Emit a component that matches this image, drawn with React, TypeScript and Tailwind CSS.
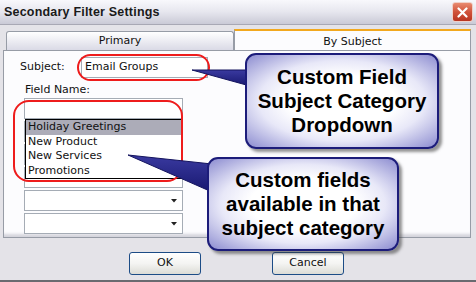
import React from "react";

const ui = { fontFamily: '"DejaVu Sans", Verdana, sans-serif' };
const callFont = { fontFamily: '"Liberation Sans", Arial, sans-serif' };

const Combo = ({ arrow = true, children }: { arrow?: boolean; children?: React.ReactNode }) => (
  <div className="relative h-[21px] w-[159px] border border-[#a5acb5] bg-white">
    {arrow && (
      <svg className="absolute right-[5px] top-[8px]" width="6" height="4" viewBox="0 0 6 4">
        <path d="M0 0h6L3 3.5z" fill="#222" />
      </svg>
    )}
    {children}
  </div>
);

const Callout = ({ lines, className }: { lines: string[]; className: string }) => (
  <div
    className={`absolute rounded-[11px] border-2 border-[#1c1c7a] bg-[radial-gradient(ellipse_at_center,#ffffff_40%,#e8e8f8_62%,#8c8cd0_100%)] shadow-[3px_3px_3px_rgba(60,60,60,0.55)] flex flex-col items-center justify-center text-[20.5px] leading-[24px] font-bold text-black ${className}`}
    style={callFont}
  >
    {lines.map((l) => (
      <div key={l}>{l}</div>
    ))}
  </div>
);

export default function App() {
  return (
    <div className="relative w-[476px] h-[282px] overflow-hidden bg-[#e4e3e8] flex flex-col border-b-2 border-[#6a6a70]" style={ui}>
      {/* title bar */}
      <div className="h-[25px] shrink-0 flex items-center justify-between pl-[4px] pr-[3px] bg-gradient-to-b from-[#f8f8fc] via-[#e6e6ee] to-[#cacad6] border-b border-[#a8a8b4]">
        <span className="text-[12.5px] font-bold text-[#1a1a1a] tracking-[0.2px]" style={callFont}>
          Secondary Filter Settings
        </span>
        <div className="w-[21px] h-[20px] rounded-[3px] border border-[#f0d0c8] bg-gradient-to-b from-[#e88a70] via-[#d0523a] to-[#b83420] flex items-center justify-center">
          <svg width="11" height="11" viewBox="0 0 11 11">
            <path d="M1.5 1.5l8 8M9.5 1.5l-8 8" stroke="#fff" strokeWidth="2.2" strokeLinecap="round" />
          </svg>
        </div>
      </div>

      {/* tabs */}
      <div className="flex items-end pl-[6px] pr-[5px] pt-[4px] h-[25px] shrink-0">
        <div className="w-[228px] h-[19px] flex items-center justify-center text-[11px] text-[#111] border border-b-0 border-[#979ca6] rounded-t-[3px] bg-gradient-to-b from-[#ffffff] to-[#dadae6]">
          Primary
        </div>
        <div className="flex-1 h-[21px] flex items-start justify-center pt-[3px] text-[11px] text-[#111] border-t-2 border-[#f2a81e] border-x border-x-[#979ca6] bg-[#fcfcfe] relative z-10">
          By Subject
        </div>
      </div>

      {/* tab panel */}
      <div className="mx-[3px] w-[468px] h-[188px] shrink-0 border border-[#979ca6] bg-[#fcfcfe] shadow-[inset_0_-5px_3px_-2px_#d4d4dc] flex flex-col pl-[16px] pt-[6px] text-[11px] text-[#111]">
        <div className="flex items-center h-[21px]">
          <span className="w-[61px]">Subject:</span>
          <div className="w-[127px] h-[21px] border border-[#a5acb5] bg-white pl-[3px] flex items-center">Email Groups</div>
        </div>
        <div className="pl-[5px] mt-[4px] h-[15px] leading-[15px]">Field Name:</div>
        <div className="pl-[4px] mt-[1px] flex flex-col gap-[2px]">
          <div className="relative">
            <Combo arrow={false} />
            <div className="absolute left-[1px] top-[21px] w-[157px] h-[60px] border border-black bg-white z-10 flex flex-col leading-[14.5px]">
              <div className="bg-[#acacb8] pl-[2px]">Holiday Greetings</div>
              <div className="pl-[2px]">New Product</div>
              <div className="pl-[2px]">New Services</div>
              <div className="pl-[2px]">Promotions</div>
            </div>
          </div>
          <Combo />
          <Combo />
          <Combo />
          <Combo />
          <Combo />
        </div>
      </div>

      {/* buttons */}
      <div className="flex-1 flex items-start gap-[71px] pl-[129px] pt-[14px]">
        {["OK", "Cancel"].map((b) => (
          <div
            key={b}
            className="w-[72px] h-[23px] rounded-[3px] border border-[#1c4c86] bg-gradient-to-b from-[#ffffff] via-[#f4f4f2] to-[#dcdcd6] flex items-center justify-center text-[11px] text-[#111]"
          >
            {b}
          </div>
        ))}
      </div>

      {/* annotations */}
      <div className="absolute left-[77px] top-[54px] w-[133px] h-[27px] rounded-full border-2 border-[#ee1c1c] z-20" />
      <div className="absolute left-[13px] top-[100px] w-[170px] h-[82px] rounded-[16px] border-2 border-[#ee1c1c] z-20" />

      <svg className="absolute left-0 top-0 z-20" width="476" height="282">
        <defs>
          <linearGradient id="wedge" x1="0" y1="0" x2="0" y2="1">
            <stop offset="0" stopColor="#3a3aa0" />
            <stop offset="1" stopColor="#181870" />
          </linearGradient>
        </defs>
        <path d="M192 70L250 70L250 86Z" fill="url(#wedge)" stroke="#14145e" strokeWidth="1" />
        <path d="M128 155L212 164L212 192Z" fill="url(#wedge)" stroke="#14145e" strokeWidth="1" />
      </svg>

      <Callout lines={["Custom Field", "Subject Category", "Dropdown"]} className="left-[245px] top-[53px] w-[194px] h-[96px] z-30" />
      <Callout lines={["Custom fields", "available in that", "subject category"]} className="left-[207px] top-[157px] w-[192px] h-[94px] z-30" />
    </div>
  );
}
